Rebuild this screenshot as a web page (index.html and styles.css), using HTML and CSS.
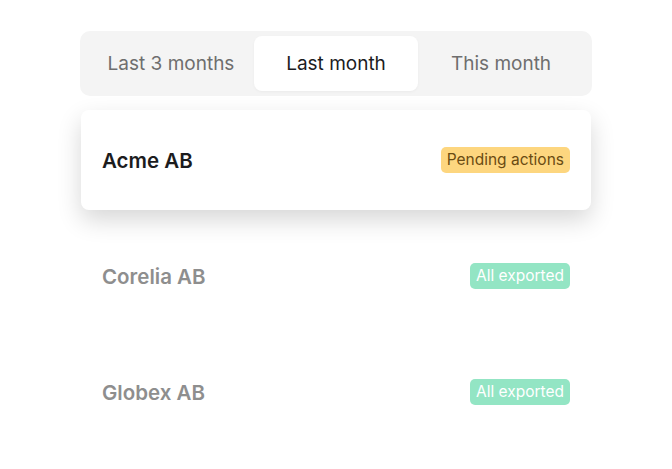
FILE: index.html
```html
<!DOCTYPE html>
<html lang="en">
<head>
    <meta charset="UTF-8">
    <meta name="viewport" content="width=device-width, initial-scale=1.0">
    <title>Exports</title>
    <link rel="stylesheet" href="styles.css">
</head>
<body>
    <div class="container">
        <!-- Period switcher -->
        <div class="tabs">
            <button class="tab">Last 3 months</button>
            <button class="tab active">Last month</button>
            <button class="tab">This month</button>
        </div>

        <div class="list">
            <div class="row current">
                <span class="company">Acme AB</span>
                <span class="badge pending">Pending actions</span>
            </div>
            <div class="row">
                <span class="company">Corelia AB</span>
                <span class="badge done">All exported</span>
            </div>
            <div class="row">
                <span class="company">Globex AB</span>
                <span class="badge done">All exported</span>
            </div>
        </div>
    </div>
</body>
</html>
```

FILE: styles.css
```css
body {
    font-family: Inter, "Noto Sans", sans-serif;
    margin: 0;
    padding: 0;
    background-color: #fff;
    color: #1c1c1e;
}

.container {
    width: 512px;
    margin: 0 auto 0 80px;
    padding-top: 31px;
}

.tabs {
    display: flex;
    gap: 1px;
    padding: 5px 9px;
    background-color: #f4f4f4;
    border-radius: 10px;
}

.tab {
    flex: 1;
    height: 55px;
    border: none;
    border-radius: 8px;
    background-color: transparent;
    font-family: inherit;
    font-size: 19px;
    color: #6e6e6e;
    cursor: pointer;
}

.tab.active {
    background-color: #fff;
    color: #1c1c1e;
    box-shadow: 0 1px 3px rgba(0, 0, 0, 0.04);
}

.list {
    display: flex;
    flex-direction: column;
    gap: 16px;
    margin-top: 14px;
}

.row {
    display: flex;
    align-items: center;
    justify-content: space-between;
    height: 100px;
    margin: 0 1px;
    padding: 0 21px;
    border-radius: 8px;
}

.row.current {
    background-color: #fff;
    box-shadow: 0 10px 24px rgba(0, 0, 0, 0.16);
}

.company {
    font-size: 20.5px;
    font-weight: 600;
    color: #8e8e8e;
}

.row.current .company {
    color: #1c1c1e;
}

.badge {
    padding: 4px 6px;
    border-radius: 5px;
    font-size: 15.5px;
    line-height: 18px;
}

.badge.pending {
    background-color: #fdd67f;
    color: #6a4b12;
}

.badge.done {
    background-color: #93e5c4;
    color: #fff;
}
```
